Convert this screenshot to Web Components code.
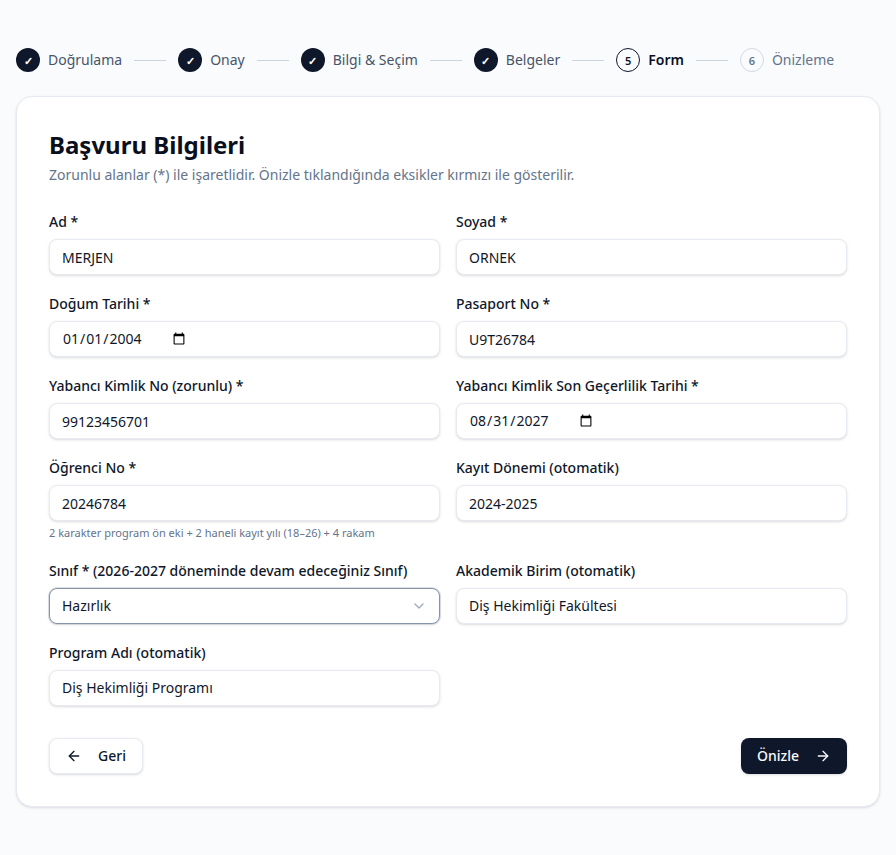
<!DOCTYPE html>
<html lang="tr">
<head>
<meta charset="utf-8">
<title>Başvuru Bilgileri</title>
<style>
html,body{margin:0;padding:0;background:#fafbfd;font-family:"Noto Sans",sans-serif;color:#0f172a;}
</style>
</head>
<body>
<apply-page>
  <step-bar>
    <step-item state="done">Doğrulama</step-item>
    <step-item state="done">Onay</step-item>
    <step-item state="done">Bilgi &amp; Seçim</step-item>
    <step-item state="done">Belgeler</step-item>
    <step-item state="current" num="5">Form</step-item>
    <step-item state="todo" num="6" last>Önizleme</step-item>
  </step-bar>
  <form-card heading="Başvuru Bilgileri" sub="Zorunlu alanlar (*) ile işaretlidir. Önizle tıklandığında eksikler kırmızı ile gösterilir.">
    <form-grid>
      <form-field label="Ad *" value="MERJEN"></form-field>
      <form-field label="Soyad *" value="ORNEK"></form-field>
      <form-field label="Doğum Tarihi *" type="date" value="2004-01-01"></form-field>
      <form-field label="Pasaport No *" value="U9T26784"></form-field>
      <form-field label="Yabancı Kimlik No (zorunlu) *" value="99123456701"></form-field>
      <form-field label="Yabancı Kimlik Son Geçerlilik Tarihi *" type="date" value="2027-08-31"></form-field>
      <form-field label="Öğrenci No *" value="20246784" hint="2 karakter program ön eki + 2 haneli kayıt yılı (18–26) + 4 rakam"></form-field>
      <form-field label="Kayıt Dönemi (otomatik)" value="2024-2025"></form-field>
      <form-field label="Sınıf * (2026-2027 döneminde devam edeceğiniz Sınıf)" type="select" value="Hazırlık"></form-field>
      <form-field label="Akademik Birim (otomatik)" value="Diş Hekimliği Fakültesi"></form-field>
      <form-field label="Program Adı (otomatik)" value="Diş Hekimliği Programı"></form-field>
    </form-grid>
    <form-actions>
      <nav-button kind="back">Geri</nav-button>
      <nav-button kind="next">Önizle</nav-button>
    </form-actions>
  </form-card>
</apply-page>
<script>
function def(name, css, html){
  customElements.define(name, class extends HTMLElement{
    constructor(){super();this.attachShadow({mode:'open'});}
    connectedCallback(){
      this.shadowRoot.innerHTML='<style>'+css+'</style>'+(typeof html==='function'?html(this):html);
    }
  });
}
function esc(s){return String(s||'').replace(/&/g,'&amp;').replace(/"/g,'&quot;').replace(/</g,'&lt;');}

def('apply-page',':host{display:block;padding:48px 16px 48px;box-sizing:border-box;}','<slot></slot>');
def('step-bar',':host{display:flex;align-items:center;height:24px;margin-bottom:24px;}','<slot></slot>');
def('step-item',`
:host{display:flex;align-items:center;font-size:14px;line-height:20px;color:#475569;white-space:nowrap;}
.dot{width:24px;height:24px;border-radius:50%;box-sizing:border-box;display:flex;align-items:center;justify-content:center;font-size:11px;font-weight:600;line-height:1;flex:none;margin-right:8px;}
.done{background:#0f172a;color:#fff;}
.current{border:1px solid #0f172a;color:#0f172a;background:transparent;}
.todo{border:1px solid #d3d8e0;color:#64748b;background:transparent;}
.line{width:32px;height:1px;background:#cbd5e1;margin:0 12px;flex:none;}
:host([state=current]) .t{font-weight:600;color:#0a0f1e;}
:host([state=todo]) .t{color:#64748b;}
`,h=>{
  const st=h.getAttribute('state');
  return `<span class="dot ${st}">${st==='done'?'✓':esc(h.getAttribute('num'))}</span><span class="t"><slot></slot></span>${h.hasAttribute('last')?'':'<span class="line"></span>'}`;
});
def('form-card',`
:host{display:block;background:#fff;border:1px solid #e7eaf0;border-radius:16px;padding:32px;box-shadow:0 1px 3px rgba(15,23,42,.1),0 1px 2px -1px rgba(15,23,42,.1);}
h1{margin:0;font-size:24px;line-height:32px;font-weight:700;color:#0a0f1e;}
p{margin:4px 0 27px;font-size:14px;line-height:20px;color:#64748b;}
`,h=>`<h1>${esc(h.getAttribute('heading'))}</h1><p>${esc(h.getAttribute('sub'))}</p><slot></slot>`);
def('form-grid',':host{display:grid;grid-template-columns:1fr 1fr;column-gap:16px;row-gap:19px;}','<slot></slot>');
def('form-actions',':host{display:flex;justify-content:space-between;margin-top:32px;}','<slot></slot>');
def('form-field',`
:host{display:block;min-width:0;}
label{display:block;font-size:14px;line-height:20px;font-weight:500;color:#0f172a;margin-bottom:7px;}
.box{display:flex;width:100%;height:36px;box-sizing:border-box;border:1px solid #e7eaf0;border-radius:8px;background:#fff;padding:4px 12px;font:400 14px/20px "Noto Sans",sans-serif;color:#0f172a;box-shadow:0 1px 3px rgba(15,23,42,.12),0 1px 2px -1px rgba(15,23,42,.1);outline:none;margin:0;}
select.box{display:block;appearance:none;-webkit-appearance:none;border-color:#8694a8;box-shadow:0 0 0 1px rgba(100,116,139,.2),0 1px 3px rgba(15,23,42,.1);}
.sel{position:relative;display:block;height:36px;}
.sel svg{position:absolute;right:13px;top:10px;width:16px;height:16px;pointer-events:none;opacity:.6;}
.hint{margin:4px 0 .6px;font-size:11px;line-height:16px;color:#64748b;}
`,h=>{
  const t=h.getAttribute('type')||'text',v=esc(h.getAttribute('value')),l=esc(h.getAttribute('label'));
  let c;
  if(t==='select') c=`<span class="sel"><select class="box"><option>${v}</option></select><svg viewBox="0 0 24 24" fill="none" stroke="#64748b" stroke-width="2" stroke-linecap="round" stroke-linejoin="round"><path d="m6 9 6 6 6-6"/></svg></span>`;
  else c=`<input class="box" type="${t}" value="${v}">`;
  const hint=h.getAttribute('hint');
  return `<label>${l}</label>${c}${hint?`<p class="hint">${esc(hint)}</p>`:''}`;
});
def('nav-button',`
:host{display:inline-flex;align-items:center;height:36px;box-sizing:border-box;border-radius:8px;font-size:14px;font-weight:500;line-height:20px;padding:0 16px;gap:16px;box-shadow:0 1px 3px rgba(15,23,42,.12),0 1px 2px -1px rgba(15,23,42,.1);}
:host([kind=back]){background:#fff;border:1px solid #e7eaf0;color:#0f172a;}
:host([kind=next]){background:#0f172a;color:#f8fafc;}
svg{width:16px;height:16px;flex:none;}
`,h=>{
  const back=h.getAttribute('kind')==='back';
  const ic=`<svg viewBox="0 0 24 24" fill="none" stroke="currentColor" stroke-width="2" stroke-linecap="round" stroke-linejoin="round">${back?'<path d="m12 19-7-7 7-7"/><path d="M19 12H5"/>':'<path d="M5 12h14"/><path d="m12 5 7 7-7 7"/>'}</svg>`;
  return back?ic+'<slot></slot>':'<slot></slot>'+ic;
});
</script>
</body>
</html>
